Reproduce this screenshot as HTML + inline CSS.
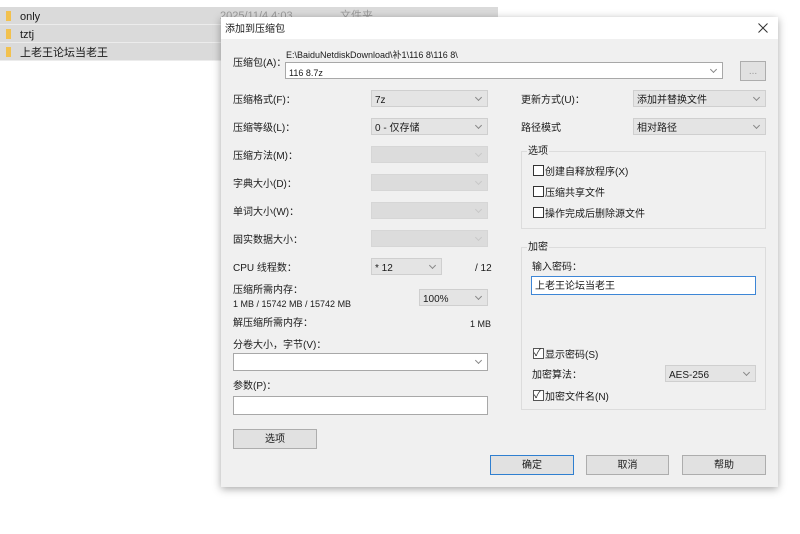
<!DOCTYPE html><html><head><meta charset="utf-8"><style>
*{box-sizing:border-box;margin:0;padding:0}
body{width:800px;height:534px;background:#fff;position:relative;overflow:hidden;font-family:"Liberation Sans","Noto Sans CJK SC",sans-serif;font-size:10px;line-height:16px;color:#1a1a1a}
.a{position:absolute;white-space:nowrap;padding-top:3px}
.row{position:absolute;left:0;width:498px;height:18px;background:#dadada;border-bottom:1px solid #ececec;font-size:11px;line-height:14px}
.row .f{position:absolute;left:6px;top:4px;width:5px;height:10px;background:#f2c14e}
.row .t{position:absolute;left:20px;top:3px}
.dlg{position:absolute;left:221px;top:17px;width:557px;height:470px;background:#f0f0f0;box-shadow:0 2px 8px rgba(0,0,0,.35)}
.cb{position:absolute;height:17px;background:#e4e4e4;border:1px solid #cfcfcf}
.cb.dis{background:#dcdcdc;border-color:#d6d6d6}
.cb.w{background:#fff;border-color:#a8a8a8}
.cb span{position:absolute;left:3px;top:2px}
.cb:after{content:"";position:absolute;right:6px;top:4px;width:4px;height:4px;border-right:1px solid #888;border-bottom:1px solid #888;transform:rotate(45deg)}
.cb.dis:after{border-color:#c8c8c8}
.grp{position:absolute;border:1px solid #dcdcdc;background:#f0f0f0}
.chk{position:absolute;width:11px;height:11px;border:1px solid #333;background:#fff}
.btn{position:absolute;height:20px;background:#e1e1e1;border:1px solid #adadad;text-align:center;line-height:20px}
</style></head><body>
<div class="row" style="top:7px"><div class="f"></div><div class="t">only</div><div class="a" style="left:220px;top:-1px;color:#999">2025/11/4 4:03</div><div class="a" style="left:340px;top:-1px;color:#999">文件夹</div></div>
<div class="row" style="top:25px"><div class="f"></div><div class="t">tztj</div></div>
<div class="row" style="top:43px"><div class="f"></div><div class="t">上老王论坛当老王</div></div>

<div class="dlg">
<div class="a" style="left:0;top:0;width:557px;height:22px;background:#fff;padding:0"></div>
<div class="a" style="left:4px;top:4px;line-height:12px">添加到压缩包</div>
<svg style="position:absolute;left:537px;top:6px" width="10" height="10"><path d="M0.5 0.5L9.5 9.5M9.5 0.5L0.5 9.5" stroke="#333" stroke-width="1"/></svg>
</div>
<div class="a" style="left:233px;top:53px">压缩包(A)：</div>
<div class="a" style="left:286px;top:46px;font-size:9px;line-height:12px">E:\BaiduNetdiskDownload\补1\116 8\116 8\</div>
<div class="cb w" style="left:285px;top:62px;width:438px"><span style="font-size:9px">116 8.7z</span></div>
<div class="btn" style="left:740px;top:61px;width:26px;color:#999">...</div>

<div class="a" style="left:233px;top:90px">压缩格式(F)：</div>
<div class="a" style="left:233px;top:118px">压缩等级(L)：</div>
<div class="a" style="left:233px;top:146px">压缩方法(M)：</div>
<div class="a" style="left:233px;top:174px">字典大小(D)：</div>
<div class="a" style="left:233px;top:202px">单词大小(W)：</div>
<div class="a" style="left:233px;top:230px">固实数据大小：</div>
<div class="a" style="left:233px;top:258px">CPU 线程数：</div>
<div class="a" style="left:233px;top:280px">压缩所需内存：</div>
<div class="a" style="left:233px;top:293px;font-size:9px">1 MB / 15742 MB / 15742 MB</div>
<div class="a" style="left:233px;top:313px">解压缩所需内存：</div>
<div class="a" style="left:470px;top:313px;font-size:9px">1 MB</div>
<div class="a" style="left:233px;top:335px">分卷大小，字节(V)：</div>
<div class="a" style="left:233px;top:376px">参数(P)：</div>
<div class="cb" style="left:371px;top:90px;width:117px"><span>7z</span></div>
<div class="cb" style="left:371px;top:118px;width:117px"><span>0 - 仅存储</span></div>
<div class="cb dis" style="left:371px;top:146px;width:117px"></div>
<div class="cb dis" style="left:371px;top:174px;width:117px"></div>
<div class="cb dis" style="left:371px;top:202px;width:117px"></div>
<div class="cb dis" style="left:371px;top:230px;width:117px"></div>
<div class="cb" style="left:371px;top:258px;width:71px"><span>* 12</span></div>
<div class="a" style="left:475px;top:258px">/ 12</div>
<div class="cb" style="left:419px;top:289px;width:69px"><span>100%</span></div>
<div class="cb w" style="left:233px;top:353px;width:255px;height:18px"></div>
<div class="a" style="left:233px;top:396px;width:255px;height:19px;background:#fff;border:1px solid #a8a8a8;padding:0"></div>
<div class="btn" style="left:233px;top:429px;width:84px">选项</div>

<div class="a" style="left:521px;top:90px">更新方式(U)：</div>
<div class="a" style="left:521px;top:118px">路径模式</div>
<div class="cb" style="left:633px;top:90px;width:133px"><span>添加并替换文件</span></div>
<div class="cb" style="left:633px;top:118px;width:133px"><span>相对路径</span></div>
<div class="grp" style="left:521px;top:151px;width:245px;height:78px"></div>
<div class="a" style="left:527px;top:142px;background:#f0f0f0;padding:2px 1px 0">选项</div>
<div class="chk" style="left:533px;top:165px"></div><div class="a" style="left:545px;top:162px">创建自释放程序(X)</div>
<div class="chk" style="left:533px;top:186px"></div><div class="a" style="left:545px;top:183px">压缩共享文件</div>
<div class="chk" style="left:533px;top:207px"></div><div class="a" style="left:545px;top:204px">操作完成后删除源文件</div>
<div class="grp" style="left:521px;top:247px;width:245px;height:163px"></div>
<div class="a" style="left:527px;top:238px;background:#f0f0f0;padding:2px 1px 0">加密</div>
<div class="a" style="left:532px;top:257px">输入密码：</div>
<div class="a" style="left:531px;top:276px;width:225px;height:19px;background:#fff;border:1px solid #3d86d6;padding:0"><span style="position:absolute;left:3px;top:2px">上老王论坛当老王</span></div>
<div class="chk" style="left:533px;top:348px;border-color:#555;font-size:10px;line-height:9px">✓</div><div class="a" style="left:545px;top:345px">显示密码(S)</div>
<div class="a" style="left:532px;top:365px">加密算法：</div>
<div class="cb" style="left:665px;top:365px;width:91px"><span>AES-256</span></div>
<div class="chk" style="left:533px;top:390px;border-color:#555;line-height:9px">✓</div><div class="a" style="left:545px;top:387px">加密文件名(N)</div>

<div class="btn" style="left:490px;top:455px;width:84px;border-color:#2f7fd0">确定</div>
<div class="btn" style="left:586px;top:455px;width:83px">取消</div>
<div class="btn" style="left:682px;top:455px;width:84px">帮助</div>
</body></html>
